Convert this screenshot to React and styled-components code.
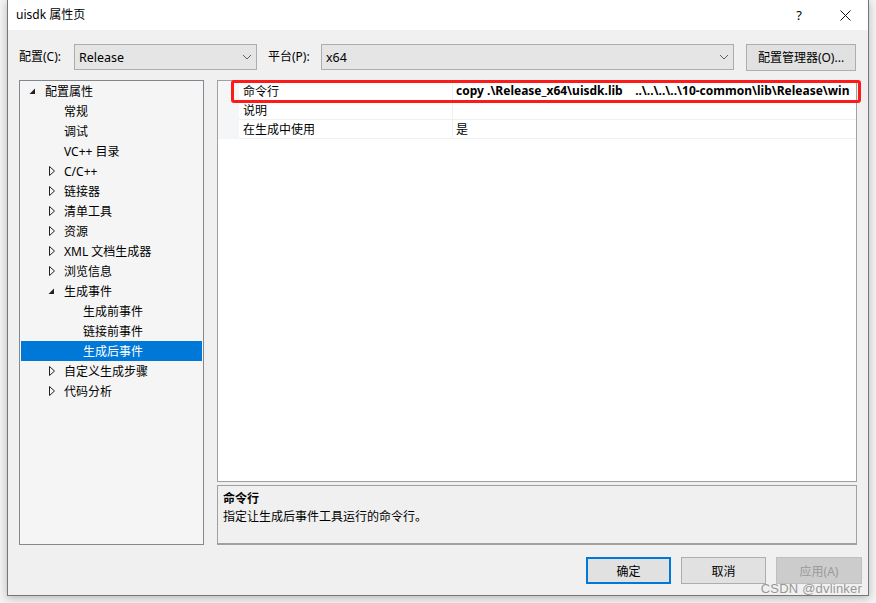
import React from "react";
import styled, { createGlobalStyle } from "styled-components";

const Global = createGlobalStyle`
  html, body { margin: 0; padding: 0; background: #f3f3f3; }
  body { font-family: "Noto Sans", "Noto Sans CJK SC", sans-serif; font-size: 12px; color: #000; }
  * { box-sizing: border-box; }
`;

const Page = styled.div`
  width: 876px;
  height: 603px;
  padding: 0 8px 0 7px;
  overflow: hidden;
`;

const Window = styled.div`
  position: relative;
  width: 862px;
  height: 596px;
  background: #f0f0f0;
  border: 1px solid #767676;
  border-top: none;
  box-shadow: 0 2px 8px rgba(0,0,0,0.25);
  display: flex;
  flex-direction: column;
`;

const TitleBar = styled.div`
  height: 30px;
  background: #fff;
  display: flex;
  align-items: center;
  padding-left: 8px;
`;

const Title = styled.div`
  flex: 1;
  font-size: 12px;
  line-height: 16px;
`;

const TitleBtn = styled.div`
  width: 46px;
  height: 30px;
  display: flex;
  align-items: center;
  justify-content: center;
  font-size: 13px;
`;

const ConfigRow = styled.div`
  margin-top: 14px;
  height: 26px;
  display: flex;
  align-items: center;
  padding-left: 11px;
`;

const Label = styled.span`
  width: ${p => p.$w}px;
  line-height: 16px;
`;

const Select = styled.div`
  width: ${p => p.$w}px;
  height: 26px;
  background: #e5e5e5;
  border: 1px solid #adadad;
  display: flex;
  align-items: center;
  padding: 0 4px 0 4px;
  margin-right: ${p => p.$mr || 0}px;
`;

const SelectText = styled.span`
  flex: 1;
  font-size: 12.5px;
`;

const Button = styled.div`
  width: ${p => p.$w}px;
  height: 27px;
  background: ${p => (p.$disabled ? "#cccccc" : "#e1e1e1")};
  color: ${p => (p.$disabled ? "#9a9a9a" : "#000")};
  border: ${p => (p.$default ? "2px solid #0078d7" : p.$disabled ? "1px solid #bfbfbf" : "1px solid #adadad")};
  display: flex;
  align-items: center;
  justify-content: center;
  font-size: 12px;
`;

const Main = styled.div`
  display: flex;
  margin-top: 10px;
  padding-left: 11px;
  height: 465px;
  gap: 13px;
`;

const Tree = styled.div`
  width: 185px;
  background: #f5f5f5;
  border: 1px solid #828790;
  padding: 0 1px;
`;

const TreeRow = styled.div`
  height: 20px;
  display: flex;
  align-items: center;
  padding-left: ${p => 5 + p.$depth * 19}px;
  background: ${p => (p.$selected ? "#0078d7" : "transparent")};
  color: ${p => (p.$selected ? "#fff" : "#000")};
  font-size: 12px;
`;

const Arrow = styled.span`
  width: 19px;
  height: 20px;
  display: flex;
  align-items: center;
  padding-left: ${p => (p.$expanded ? 3 : 4)}px;
`;

const Right = styled.div`
  width: 640px;
  display: flex;
  flex-direction: column;
  gap: 3px;
`;

const Grid = styled.div`
  position: relative;
  height: 402px;
  background: #fff;
  border: 1px solid #a0a0a0;
`;

const GridRow = styled.div`
  display: flex;
  height: ${p => (p.$first ? 20 : 19)}px;
`;

const Gutter = styled.div`
  width: 21px;
  background: #f5f6f7;
`;

const NameCell = styled.div`
  width: 214px;
  padding-left: 4px;
  border-bottom: 1px solid #f0f0f0;
  border-right: 1px solid #f0f0f0;
  display: flex;
  align-items: center;
  font-size: 12px;
`;

const ValueCell = styled.div`
  flex: 1;
  padding-left: 3px;
  border-bottom: 1px solid #f0f0f0;
  display: flex;
  align-items: center;
  overflow: hidden;
  white-space: pre;
  font-size: 12px;
  font-weight: ${p => (p.$bold ? 700 : 400)};
`;

const Highlight = styled.div`
  position: absolute;
  left: 13px;
  top: -1px;
  width: 630px;
  height: 23px;
  border: 3px solid #ff1a1a;
  border-radius: 3px;
  pointer-events: none;
`;

const Desc = styled.div`
  height: 60px;
  background: #f0f0f0;
  border: 1px solid #a0a0a0;
  border-bottom-width: 2px;
  padding: 4px 5px;
  display: flex;
  flex-direction: column;
`;

const DescTitle = styled.div`
  font-weight: 700;
  line-height: 18px;
`;

const DescText = styled.div`
  line-height: 18px;
`;

const Footer = styled.div`
  display: flex;
  justify-content: flex-end;
  gap: 10px;
  padding: 12px 6px 0 0;
`;

const Watermark = styled.div`
  position: absolute;
  right: 6px;
  bottom: -1px;
  font-family: "Liberation Sans", Arial, sans-serif;
  font-size: 13px;
  color: rgba(120,120,120,0.75);
  letter-spacing: 0.2px;
`;

const Chevron = () => (
  <svg width="10" height="6" viewBox="0 0 10 6">
    <path d="M1 1 L5 5 L9 1" fill="none" stroke="#606060" strokeWidth="1" />
  </svg>
);

const Expanded = () => (
  <svg width="7" height="7" viewBox="0 0 7 7">
    <path d="M6 0.5 L6 6 L0.5 6 Z" fill="#222" />
  </svg>
);

const Collapsed = () => (
  <svg width="6" height="10" viewBox="0 0 6 10">
    <path d="M0.5 0.5 L5.5 5 L0.5 9.5 Z" fill="none" stroke="#222" strokeWidth="1" />
  </svg>
);

const tree = [
  { t: "配置属性", d: 0, a: "e" },
  { t: "常规", d: 1 },
  { t: "调试", d: 1 },
  { t: "VC++ 目录", d: 1 },
  { t: "C/C++", d: 1, a: "c" },
  { t: "链接器", d: 1, a: "c" },
  { t: "清单工具", d: 1, a: "c" },
  { t: "资源", d: 1, a: "c" },
  { t: "XML 文档生成器", d: 1, a: "c" },
  { t: "浏览信息", d: 1, a: "c" },
  { t: "生成事件", d: 1, a: "e" },
  { t: "生成前事件", d: 2 },
  { t: "链接前事件", d: 2 },
  { t: "生成后事件", d: 2, s: true },
  { t: "自定义生成步骤", d: 1, a: "c" },
  { t: "代码分析", d: 1, a: "c" },
];

export default function App() {
  return (
    <>
      <Global />
      <Page>
        <Window>
          <TitleBar>
            <Title>uisdk 属性页</Title>
            <TitleBtn>?</TitleBtn>
            <TitleBtn>
              <svg width="11" height="11" viewBox="0 0 11 11">
                <path d="M0.5 0.5 L10.5 10.5 M10.5 0.5 L0.5 10.5" stroke="#111" strokeWidth="1" />
              </svg>
            </TitleBtn>
          </TitleBar>
          <ConfigRow>
            <Label $w={55}>配置(C):</Label>
            <Select $w={183} $mr={11}>
              <SelectText>Release</SelectText>
              <Chevron />
            </Select>
            <Label $w={53}>平台(P):</Label>
            <Select $w={413} $mr={12}>
              <SelectText>x64</SelectText>
              <Chevron />
            </Select>
            <Button $w={110}>配置管理器(O)...</Button>
          </ConfigRow>
          <Main>
            <Tree>
              {tree.map((n, i) => (
                <TreeRow key={i} $depth={n.d} $selected={n.s}>
                  <Arrow $expanded={n.a === "e"}>
                    {n.a === "e" ? <Expanded /> : n.a === "c" ? <Collapsed /> : null}
                  </Arrow>
                  <span>{n.t}</span>
                </TreeRow>
              ))}
            </Tree>
            <Right>
              <Grid>
                <GridRow $first>
                  <Gutter />
                  <NameCell>命令行</NameCell>
                  <ValueCell $bold>{"copy .\\Release_x64\\uisdk.lib    ..\\..\\..\\..\\10-common\\lib\\Release\\win"}</ValueCell>
                </GridRow>
                <GridRow>
                  <Gutter />
                  <NameCell>说明</NameCell>
                  <ValueCell></ValueCell>
                </GridRow>
                <GridRow>
                  <Gutter />
                  <NameCell>在生成中使用</NameCell>
                  <ValueCell>是</ValueCell>
                </GridRow>
                <Highlight />
              </Grid>
              <Desc>
                <DescTitle>命令行</DescTitle>
                <DescText>指定让生成后事件工具运行的命令行。</DescText>
              </Desc>
            </Right>
          </Main>
          <Footer>
            <Button $w={85} $default>确定</Button>
            <Button $w={85}>取消</Button>
            <Button $w={86} $disabled>应用(A)</Button>
          </Footer>
          <Watermark>CSDN @dvlinker</Watermark>
        </Window>
      </Page>
    </>
  );
}
